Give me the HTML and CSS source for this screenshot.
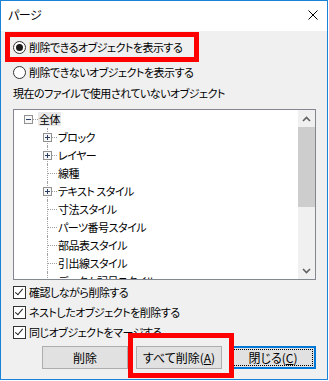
FILE: index.html
```html
<!DOCTYPE html>
<html lang="ja">
  <head>
    <meta charset="UTF-8" />
    <title>パージ</title>
    <link rel="stylesheet" href="styles.css">
  </head>
  <body>
    <div class="window">
      <div class="titlebar">
        <span class="title">パージ</span>
        <svg class="close" width="10" height="10" viewBox="0 0 10 10">
          <path d="M0.5 0.5 L9.5 9.5 M9.5 0.5 L0.5 9.5" stroke="#000" stroke-width="1" fill="none" />
        </svg>
      </div>

      <div class="content">
        <label class="option first">
          <span class="radio checked"></span>
          <span>削除できるオブジェクトを表示する</span>
        </label>
        <label class="option second">
          <span class="radio"></span>
          <span>削除できないオブジェクトを表示する</span>
        </label>
        <p class="caption">現在のファイルで使用されていないオブジェクト</p>

        <div class="tree">
          <div class="tree-view">
            <div class="node root">
              <span class="twist"><span class="box minus"></span></span>
              <span class="text selected">全体</span>
            </div>
            <div class="children">
              <div class="node"><span class="twist"><span class="box plus"></span></span><span class="text">ブロック</span></div>
              <div class="node"><span class="twist"><span class="box plus"></span></span><span class="text">レイヤー</span></div>
              <div class="node"><span class="twist"></span><span class="text">線種</span></div>
              <div class="node"><span class="twist"><span class="box plus"></span></span><span class="text">テキスト スタイル</span></div>
              <div class="node"><span class="twist"></span><span class="text">寸法スタイル</span></div>
              <div class="node"><span class="twist"></span><span class="text">パーツ番号スタイル</span></div>
              <div class="node"><span class="twist"></span><span class="text">部品表スタイル</span></div>
              <div class="node"><span class="twist"></span><span class="text">引出線スタイル</span></div>
              <div class="node"><span class="twist"></span><span class="text">データム記号スタイル</span></div>
            </div>
          </div>
          <div class="scrollbar">
            <div class="arrow">
              <svg width="9" height="6" viewBox="0 0 9 6"><path d="M1 5 L4.5 1.5 L8 5" stroke="#606060" stroke-width="1.6" fill="none" /></svg>
            </div>
            <div class="thumb"></div>
            <div class="track"></div>
            <div class="arrow">
              <svg width="9" height="6" viewBox="0 0 9 6"><path d="M1 1 L4.5 4.5 L8 1" stroke="#606060" stroke-width="1.6" fill="none" /></svg>
            </div>
          </div>
        </div>

        <div class="checks">
          <label class="option"><span class="check"></span><span>確認しながら削除する</span></label>
          <label class="option"><span class="check"></span><span>ネストしたオブジェクトを削除する</span></label>
          <label class="option"><span class="check"></span><span>同じオブジェクトをマージする</span></label>
        </div>

        <div class="buttons">
          <button class="btn">削除</button>
          <button class="btn">すべて削除(<u>A</u>)</button>
          <button class="btn default"><span class="focus">閉じる(<u>C</u>)</span></button>
        </div>
      </div>

      <!-- red marks drawn over the dialog -->
      <div class="mark mark-top"></div>
      <div class="mark mark-bottom"></div>
    </div>
  </body>
</html>
```

FILE: styles.css
```css
body {
  margin: 0;
  background: #fff;
  font-family: "Noto Sans CJK JP", "Noto Sans", sans-serif;
  font-size: 11px;
  letter-spacing: -0.5px;
  color: #000;
  font-feature-settings: "palt";
}
.window {
  position: relative;
  width: 328px;
  height: 380px;
  box-sizing: border-box;
  border: 1px solid #1883d7;
  background: #f0f0f0;
  display: flex;
  flex-direction: column;
}
.titlebar {
  height: 30px;
  background: #fff;
  display: flex;
  align-items: center;
  justify-content: space-between;
  padding: 0 9px 0 7px;
  font-size: 12px;
}
.title {
  line-height: 14px;
  margin-top: -2px;
}
.close {
  margin-top: -2px;
}
.content {
  padding: 0 11px 0 12px;
  display: flex;
  flex-direction: column;
}
.option {
  height: 20px;
  display: flex;
  align-items: center;
  gap: 3px;
  line-height: 14px;
}
.option.first {
  margin-top: 6px;
}
.option.second {
  margin-top: 5px;
}
.radio {
  width: 13px;
  height: 13px;
  box-sizing: border-box;
  border: 1px solid #333;
  border-radius: 50%;
  background: #fff;
  display: flex;
  align-items: center;
  justify-content: center;
}
.radio.checked::after {
  content: "";
  width: 7px;
  height: 7px;
  border-radius: 50%;
  background: #1a1a1a;
}
.caption {
  margin: 1px 0 0 0;
  height: 20px;
  line-height: 20px;
}

/* tree list */
.tree {
  margin-top: 6px;
  height: 171px;
  box-sizing: border-box;
  border: 1px solid #828790;
  background: #fff;
  display: flex;
  overflow: hidden;
}
.tree-view {
  flex: 1;
  padding-left: 5px;
  overflow: hidden;
}
.node {
  height: 18px;
  display: flex;
  align-items: center;
}
.children {
  margin-left: 19px;
}
.twist {
  position: relative;
  width: 19px;
  height: 18px;
  flex: none;
}
.twist::after {
  content: "";
  position: absolute;
  left: 9px;
  right: 0;
  top: 9px;
  border-top: 1px dotted #a0a0a0;
}
.children .twist::before {
  content: "";
  position: absolute;
  left: 9px;
  top: 0;
  bottom: 0;
  border-left: 1px dotted #a0a0a0;
}
.box {
  position: absolute;
  left: 5px;
  top: 5px;
  width: 9px;
  height: 9px;
  box-sizing: border-box;
  border: 1px solid #919191;
  background: #f7f7f7;
  z-index: 1;
}
.box::before {
  content: "";
  position: absolute;
  left: 1px;
  top: 3px;
  width: 5px;
  height: 1px;
  background: #2c3e66;
}
.box.plus::after {
  content: "";
  position: absolute;
  left: 3px;
  top: 1px;
  width: 1px;
  height: 5px;
  background: #2c3e66;
}
.text {
  line-height: 14px;
  padding: 0 1px;
  white-space: nowrap;
}
.text.selected {
  background: #e8e8e8;
}
.scrollbar {
  width: 17px;
  background: #f0f0f0;
  display: flex;
  flex-direction: column;
}
.arrow {
  height: 17px;
  display: flex;
  align-items: center;
  justify-content: center;
}
.thumb {
  height: 80px;
  background: #cdcdcd;
}
.track {
  flex: 1;
}

/* checkboxes */
.checks {
  margin-top: 2px;
}
.check {
  width: 13px;
  height: 13px;
  box-sizing: border-box;
  border: 1px solid #333;
  background: #fff;
  position: relative;
}
.check::after {
  content: "";
  position: absolute;
  left: 3px;
  top: 0px;
  width: 3px;
  height: 7px;
  border: solid #222;
  border-width: 0 1.5px 1.5px 0;
  transform: rotate(40deg);
}

/* buttons */
.buttons {
  margin-top: 4px;
  display: flex;
  justify-content: flex-end;
  gap: 8px;
}
.btn {
  width: 86px;
  height: 23px;
  box-sizing: border-box;
  border: 1px solid #adadad;
  background: #e1e1e1;
  font-family: inherit;
  font-size: 12px;
  letter-spacing: 0;
  font-feature-settings: "palt";
  color: #000;
  padding: 0;
  display: flex;
  align-items: center;
  justify-content: center;
}
.btn.default {
  border: 2px solid #0078d7;
  padding: 1px;
}
.focus {
  flex: 1;
  align-self: stretch;
  border: 1px dotted #000;
  display: flex;
  align-items: center;
  justify-content: center;
}

.mark {
  position: absolute;
  box-sizing: border-box;
  border: 5px solid #ff0000;
}
.mark-top {
  left: 4px;
  top: 31px;
  width: 194px;
  height: 30px;
}
.mark-bottom {
  left: 127px;
  top: 332px;
  width: 106px;
  height: 45px;
}
```
